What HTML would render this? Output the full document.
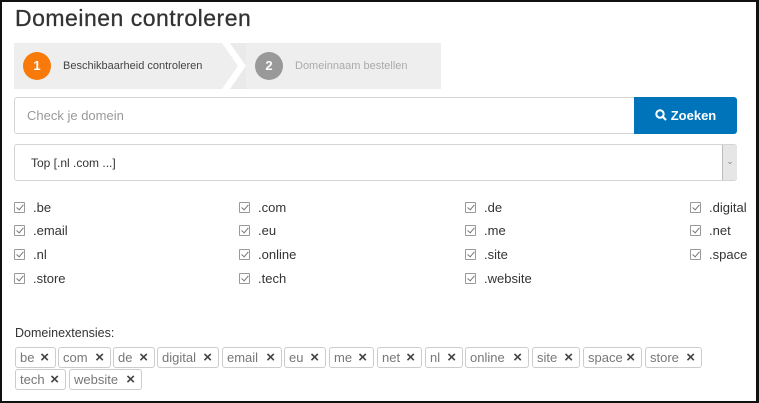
<!DOCTYPE html>
<html><head><meta charset="utf-8"><style>
*{box-sizing:border-box;margin:0;padding:0}
body{width:759px;height:403px;overflow:hidden;background:#fff;font-family:"Liberation Sans",sans-serif;position:relative}
.frame{position:absolute;left:0;top:0;width:759px;height:403px;border:2px solid #111;border-right-width:3px}
.a{position:absolute}
h1{position:absolute;left:15px;top:5px;font-size:23px;font-weight:normal;color:#333;letter-spacing:0.5px;-webkit-text-stroke:0.3px #333}
.steps{left:14px;top:43px;width:427px;height:46px;background:#eee}
.circ{width:28px;height:28px;border-radius:50%;color:#fff;font-size:13px;text-align:center;line-height:28px;font-weight:bold}
.st{font-size:11px;top:60px}
.inp{left:14px;top:97px;width:621px;height:37px;border:1px solid #d4d4d4;border-radius:3px 0 0 3px;font-size:13px;color:#999;padding:10px 12px}
.btn{left:634px;top:97px;width:103px;height:37px;background:#0074bb;color:#fff;font-weight:bold;font-size:13px;line-height:37px;text-align:center;border-radius:0 3px 3px 0}
.sel{left:14px;top:144px;width:723px;height:37px;border:1px solid #d4d4d4;border-radius:3px;font-size:12px;color:#333;padding:11px 16px}
.arr{left:722px;top:145px;width:15px;height:35px;background:#e6e6e6;border-left:1px solid #bbb;border-radius:0 3px 3px 0;color:#888;font-size:9px;text-align:center;line-height:33px}
.cb{font-size:13px;color:#333}
.cb span{display:inline-block;width:11px;height:11px;border:1px solid #999;margin-right:8px;vertical-align:-1px;position:relative;border-radius:1px}
.cb span:after{content:"";position:absolute;left:3px;top:0px;width:3px;height:6px;border:solid #777;border-width:0 1px 1px 0;transform:rotate(40deg)}
.lbl{left:15px;top:326px;font-size:12.5px;color:#333}
.t{height:21px;border:1px solid #ccc;border-radius:3px;font-size:13px;color:#777;padding:2px 0 0 4px;white-space:nowrap}
.t b{position:absolute;right:6px;top:1px;font-size:15px;line-height:18px;color:#444;font-weight:bold}
</style></head><body>
<h1>Domeinen controleren</h1>
<div class="a steps"></div>
<svg class="a" style="left:222px;top:43px" width="24" height="46"><polygon points="0,0 8,0 24,23 8,46 0,46 16,23" fill="#fff"/><polygon points="8,0 24,0 24,46 8,46 24,23" fill="#eaeaea"/></svg>
<div class="a circ" style="left:23px;top:52px;background:#f77a0a">1</div>
<div class="a st" style="left:63px;color:#444">Beschikbaarheid controleren</div>
<div class="a circ" style="left:255px;top:52px;background:#999">2</div>
<div class="a st" style="left:295px;color:#aaa">Domeinnaam bestellen</div>
<div class="a inp">Check je domein</div>
<div class="a btn"><svg width="12" height="12" style="vertical-align:-1px;margin-right:4px"><circle cx="5" cy="5" r="3.7" stroke="#fff" stroke-width="2" fill="none"/><line x1="7.5" y1="7.5" x2="11" y2="11" stroke="#fff" stroke-width="2.2"/></svg>Zoeken</div>
<div class="a sel">Top [.nl .com ...]</div>
<div class="a arr">&#8964;</div>

<div class="a cb" style="left:14px;top:200px"><span></span>.be</div>
<div class="a cb" style="left:239px;top:200px"><span></span>.com</div>
<div class="a cb" style="left:465px;top:200px"><span></span>.de</div>
<div class="a cb" style="left:690px;top:200px"><span></span>.digital</div>
<div class="a cb" style="left:14px;top:223px"><span></span>.email</div>
<div class="a cb" style="left:239px;top:223px"><span></span>.eu</div>
<div class="a cb" style="left:465px;top:223px"><span></span>.me</div>
<div class="a cb" style="left:690px;top:223px"><span></span>.net</div>
<div class="a cb" style="left:14px;top:247px"><span></span>.nl</div>
<div class="a cb" style="left:239px;top:247px"><span></span>.online</div>
<div class="a cb" style="left:465px;top:247px"><span></span>.site</div>
<div class="a cb" style="left:690px;top:247px"><span></span>.space</div>
<div class="a cb" style="left:14px;top:271px"><span></span>.store</div>
<div class="a cb" style="left:239px;top:271px"><span></span>.tech</div>
<div class="a cb" style="left:465px;top:271px"><span></span>.website</div>

<div class="a lbl">Domeinextensies:</div>
<div class="a t" style="left:15px;top:347px;width:41px">be<b>×</b></div>
<div class="a t" style="left:58px;top:347px;width:53px">com<b>×</b></div>
<div class="a t" style="left:113px;top:347px;width:42px">de<b>×</b></div>
<div class="a t" style="left:157px;top:347px;width:62px">digital<b>×</b></div>
<div class="a t" style="left:222px;top:347px;width:60px">email<b>×</b></div>
<div class="a t" style="left:284px;top:347px;width:42px">eu<b>×</b></div>
<div class="a t" style="left:329px;top:347px;width:45px">me<b>×</b></div>
<div class="a t" style="left:377px;top:347px;width:45px">net<b>×</b></div>
<div class="a t" style="left:425px;top:347px;width:38px">nl<b>×</b></div>
<div class="a t" style="left:465px;top:347px;width:64px">online<b>×</b></div>
<div class="a t" style="left:532px;top:347px;width:48px">site<b>×</b></div>
<div class="a t" style="left:583px;top:347px;width:59px">space<b>×</b></div>
<div class="a t" style="left:645px;top:347px;width:57px">store<b>×</b></div>
<div class="a t" style="left:15px;top:369px;width:51px">tech<b>×</b></div>
<div class="a t" style="left:69px;top:369px;width:73px">website<b>×</b></div>
<div class="frame"></div>
</body></html>
